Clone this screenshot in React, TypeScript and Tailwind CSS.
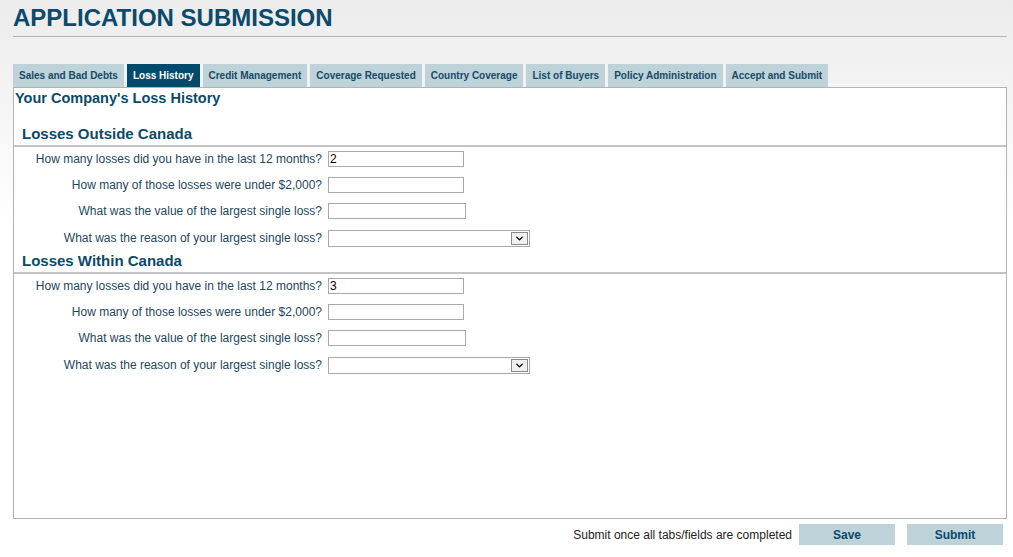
import { ChevronDown } from 'lucide-react';

const tabs = [
  'Sales and Bad Debts',
  'Loss History',
  'Credit Management',
  'Coverage Requested',
  'Country Coverage',
  'List of Buyers',
  'Policy Administration',
  'Accept and Submit',
];

type Field = { label: string; kind: 'text' | 'wide' | 'select'; value?: string };

const sections: { title: string; fields: Field[] }[] = [
  {
    title: 'Losses Outside Canada',
    fields: [
      { label: 'How many losses did you have in the last 12 months?', kind: 'text', value: '2' },
      { label: 'How many of those losses were under $2,000?', kind: 'text' },
      { label: 'What was the value of the largest single loss?', kind: 'wide' },
      { label: 'What was the reason of your largest single loss?', kind: 'select' },
    ],
  },
  {
    title: 'Losses Within Canada',
    fields: [
      { label: 'How many losses did you have in the last 12 months?', kind: 'text', value: '3' },
      { label: 'How many of those losses were under $2,000?', kind: 'text' },
      { label: 'What was the value of the largest single loss?', kind: 'wide' },
      { label: 'What was the reason of your largest single loss?', kind: 'select' },
    ],
  },
];

function FieldRow({ field }: { field: Field }) {
  return (
    <div className={`flex items-center ${field.kind === 'select' ? 'h-[28px]' : 'h-[26px]'}`}>
      <label className="w-[314px] shrink-0 pr-[6px] text-right text-[12px] text-[#1d4760]">{field.label}</label>
      {field.kind === 'select' ? (
        <div className="flex h-[17px] w-[202px] items-center justify-end border border-[#a9a9a9] bg-white pr-[1px]">
          <div className="flex h-[13px] w-[17px] items-center justify-center border border-[#8a8a8a] bg-[#f0f0f0]">
            <ChevronDown className="h-[11px] w-[11px] text-black" strokeWidth={3} />
          </div>
        </div>
      ) : (
        <input
          readOnly
          value={field.value ?? ''}
          className={`h-[16px] ${field.kind === 'wide' ? 'w-[138px]' : 'w-[136px]'} border border-[#a9a9a9] bg-white px-[1px] text-[12px] leading-none text-black outline-none`}
        />
      )}
    </div>
  );
}

export default function App() {
  return (
    <div className="min-h-[557px] w-[1013px] bg-[linear-gradient(to_bottom,#ececec_0px,#f6f6f6_120px,#ffffff_220px)] pl-[13px] pr-[6px] pt-[5px] font-['Liberation_Sans',Arial,sans-serif]">
      <h1 className="h-[31px] text-[24px] font-bold leading-[26px] text-[#0b4a6a]">APPLICATION SUBMISSION</h1>
      <div className="h-px w-[994px] bg-[#b4b4b4]" />

      <div className="mt-[27px] flex gap-[3px]">
        {tabs.map((t) => (
          <div
            key={t}
            className={`flex h-[23px] items-center px-[6px] text-[10px] font-bold ${
              t === 'Loss History' ? 'bg-[#004b6b] text-white' : 'bg-[#bed2d9] text-[#174b66]'
            }`}
          >
            {t}
          </div>
        ))}
      </div>

      <div className="h-[432px] w-[994px] border border-[#b4b4b4] bg-white">
        <h2 className="pl-px pt-[2px] text-[14.5px] font-bold leading-[16px] text-[#0b4a6a]">Your Company's Loss History</h2>
        {sections.map((s, i) => (
          <div key={s.title} className={i === 0 ? 'mt-[19px]' : 'mt-0'}>
            <h3 className="pl-[8px] text-[15px] font-bold leading-[18px] text-[#0b4a6a]">{s.title}</h3>
            <div className="mt-[2px] h-[2px] bg-[#c4c4c4]" />
            <div className="-mt-[1px]">
              {s.fields.map((f) => (
                <FieldRow key={f.label} field={f} />
              ))}
            </div>
          </div>
        ))}
      </div>

      <div className="mt-[5px] flex items-center justify-end gap-[7px] pr-[4px]">
        <span className="text-[12px] text-[#222222]">Submit once all tabs/fields are completed</span>
        <button className="h-[21px] w-[96px] bg-[#bed2d9] text-[12px] font-bold text-[#0b4a6a]">Save</button>
        <button className="ml-[5px] h-[21px] w-[96px] bg-[#bed2d9] text-[12px] font-bold text-[#0b4a6a]">Submit</button>
      </div>
    </div>
  );
}
